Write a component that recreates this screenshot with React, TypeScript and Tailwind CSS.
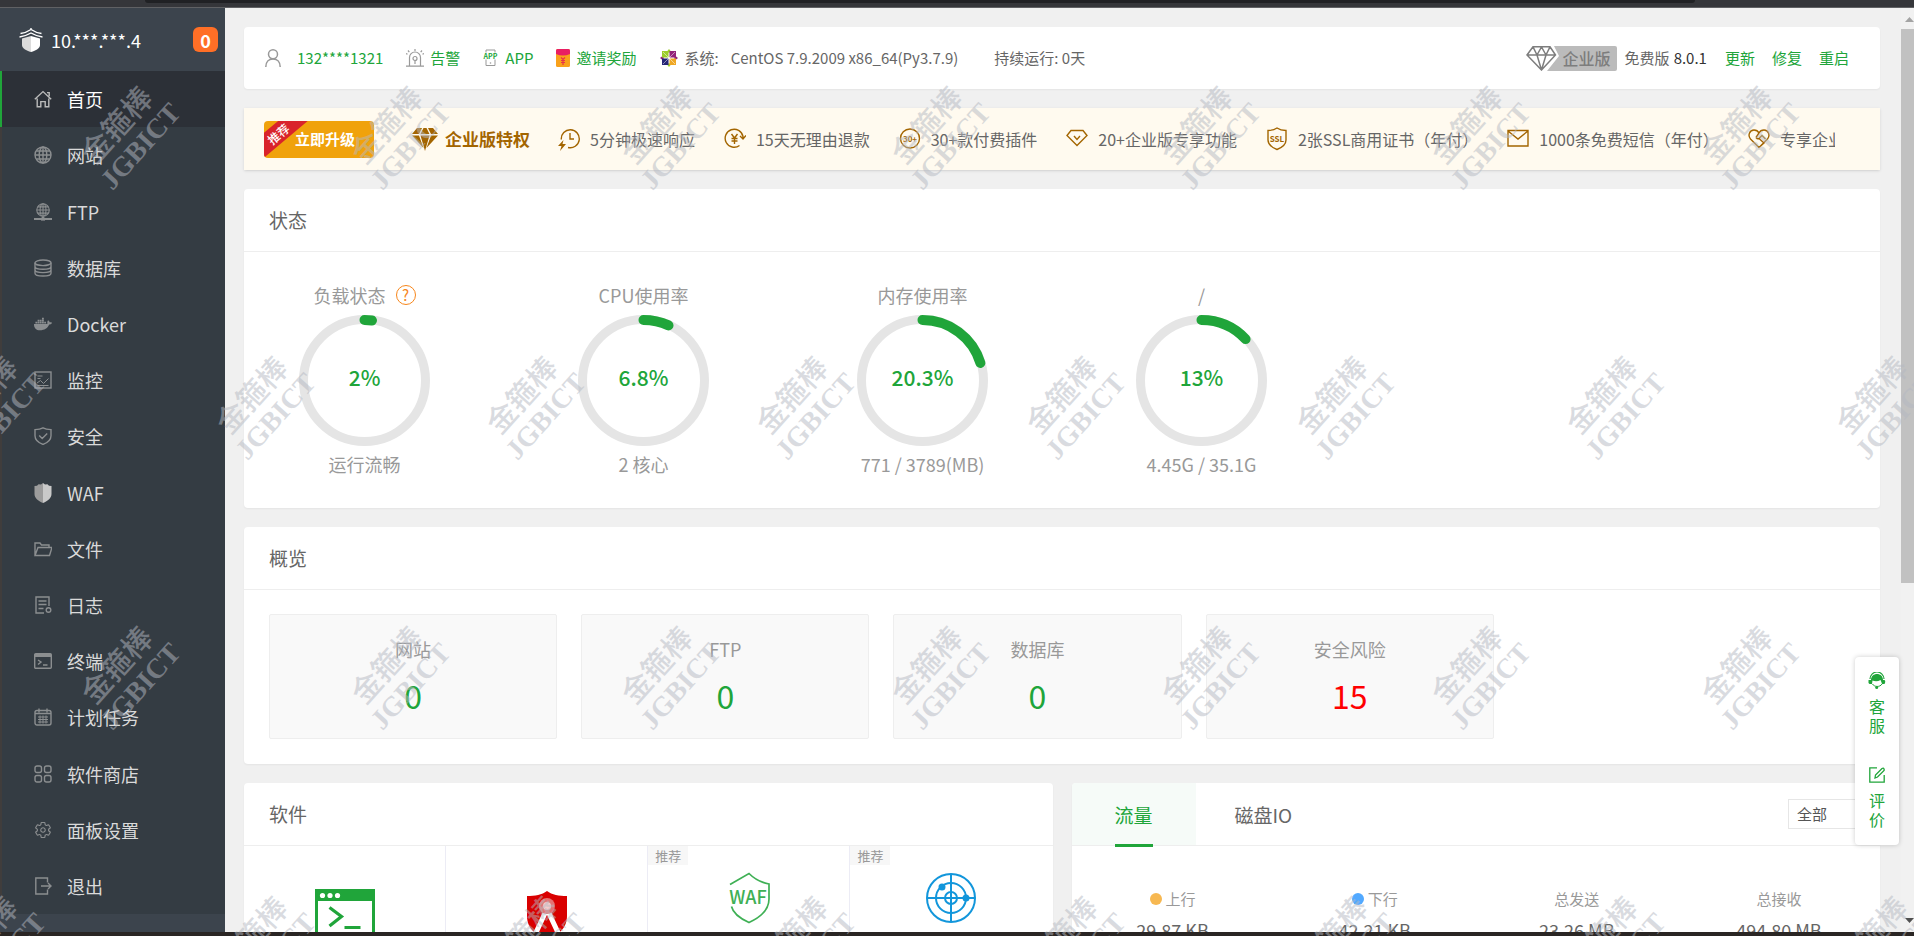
import React, { useState } from 'react';
import { FaDocker } from 'react-icons/fa';
import { IoSettingsOutline } from 'react-icons/io5';

type IconProps = { children: React.ReactNode; size?: string; box?: string };

// 线条图标的公共外壳
function Line({ children, size = 'size-[18px]', box = '0 0 18 18' }: IconProps) {
    return (
        <svg viewBox={box} className={`${size} shrink-0`} fill="none" stroke="currentColor" strokeWidth="1.4" aria-hidden="true">
            {children}
        </svg>
    );
}

const globe = (
    <>
        <circle cx="9" cy="9" r="8" />
        <ellipse cx="9" cy="9" rx="3.8" ry="8" />
        <path d="M9 1v16M1 9h16M2.3 5h13.4M2.3 13h13.4" />
    </>
);

const menuIcons: Record<string, React.ReactNode> = {
    home: <Line><path d="M.8 9.2 9 1.6l8.2 7.6M13 2.6h2.2v3.6M3.2 8.4v8.4h3.6v-5.2h4.4v5.2h3.6V8.4" /></Line>,
    site: <Line>{globe}</Line>,
    ftp: (
        <Line>
            <g transform="translate(2 0) scale(.78)">{globe}</g>
            <path d="M0 16h18M9 14v2" strokeWidth="2" />
            <rect x="7" y="14.6" width="4" height="3" fill="currentColor" stroke="none" />
        </Line>
    ),
    database: (
        <Line>
            <ellipse cx="9" cy="3.8" rx="8" ry="2.8" />
            <path d="M1 3.8v10.4c0 1.6 3.6 2.8 8 2.8s8-1.2 8-2.8V3.8M1 7.4c0 1.6 3.6 2.8 8 2.8s8-1.2 8-2.8M1 10.8c0 1.6 3.6 2.8 8 2.8s8-1.2 8-2.8" />
        </Line>
    ),
    docker: <FaDocker className="size-[18px]" />,
    monitor: (
        <Line>
            <rect x="1" y="1" width="16" height="16" />
            <path d="M3.5 5h5M3.5 7.5h3M3 12l3.5-2.5 3 3 5-5M3.5 14.5h11" strokeWidth="1" />
        </Line>
    ),
    safe: <Line><path d="M9 .9c2.4 1.3 5 1.6 8 1.7v6.2c0 4-3 6.8-8 8.6-5-1.8-8-4.6-8-8.6V2.6C4 2.5 6.6 2.2 9 .9zM5.2 8.4l3 3 5-5" /></Line>,
    waf: (
        <svg viewBox="0 0 18 20" className="h-5 w-[18px]" aria-hidden="true">
            <path d="M9 0 7 1.6 4.5 1.2 3 2.8.5 3v8c0 4 3.5 7 8.5 9z" fill="#9c9c9c" />
            <path d="m9 0 2 1.6 2.5-.4L15 2.8l2.5.2v8c0 4-3.5 7-8.5 9z" fill="#c9c9c9" />
        </svg>
    ),
    folder: <Line><path d="M1 15V3h5l1.5 2H15v2.5M1 15.5 4 7.5h14l-2.5 8z" /></Line>,
    log: (
        <Line>
            <path d="M10 17H2V1h13v9M4.5 5h8M4.5 8.5h8M4.5 12.5h5" />
            <circle cx="14.5" cy="14" r="2.3" />
        </Line>
    ),
    term: (
        <Line>
            <rect x="0.7" y="1.7" width="16.6" height="14.6" rx="1" />
            <path d="M1 3.5h16" strokeWidth="3" />
            <path d="m4 8 3 2-3 2.5M9 13h4.5" />
        </Line>
    ),
    cron: (
        <Line>
            <rect x="1" y="2.5" width="16" height="14.5" rx="2" />
            <path d="M5 .5v4M13 .5v4M1 5.5h16" />
            <path d="M4 9h10M4 11.5h10M4 14h10M6 7.5v8M9 7.5v8M12 7.5v8" strokeWidth="1" />
        </Line>
    ),
    soft: (
        <Line>
            <rect x="1" y="1" width="6.5" height="6.5" rx="2" />
            <rect x="10.5" y="1" width="6.5" height="6.5" rx="2" />
            <rect x="1" y="10.5" width="6.5" height="6.5" rx="2" />
            <rect x="10.5" y="10.5" width="6.5" height="6.5" rx="2" />
        </Line>
    ),
    config: <IoSettingsOutline className="size-[18px]" />,
    exit: <Line><path d="M13.5 5.5V1H1.8v16h11.7v-4.5M7 9h10M14 6l3 3-3 3" /></Line>,
};

const menus = [
    { key: 'home', title: '首页' },
    { key: 'site', title: '网站' },
    { key: 'ftp', title: 'FTP' },
    { key: 'database', title: '数据库' },
    { key: 'docker', title: 'Docker' },
    { key: 'monitor', title: '监控' },
    { key: 'safe', title: '安全' },
    { key: 'waf', title: 'WAF' },
    { key: 'folder', title: '文件' },
    { key: 'log', title: '日志' },
    { key: 'term', title: '终端' },
    { key: 'cron', title: '计划任务' },
    { key: 'soft', title: '软件商店' },
    { key: 'config', title: '面板设置' },
    { key: 'exit', title: '退出' },
];

const gauges = [
    { title: '负载状态', value: 2, desc: '运行流畅', help: true },
    { title: 'CPU使用率', value: 6.8, desc: '2 核心' },
    { title: '内存使用率', value: 20.3, desc: '771 / 3789(MB)' },
    { title: '/', value: 13, desc: '4.45G / 35.1G' },
];

const overview = [
    { title: '网站', count: 0 },
    { title: 'FTP', count: 0 },
    { title: '数据库', count: 0 },
    { title: '安全风险', count: 15, danger: true },
];

const traffic = [
    { title: '上行', value: '29.87 KB', dot: 'bg-[#f7b851]' },
    { title: '下行', value: '42.21 KB', dot: 'bg-[#52a9ff]' },
    { title: '总发送', value: '23.26 MB' },
    { title: '总接收', value: '494.80 MB' },
];

const privileges = [
    {
        text: '5分钟极速响应',
        icon: (
            <>
                <path d="M3.3 12.5A9 9 0 1 1 10 20.5M12 6v6h4" />
                <path d="M5.5 13 0 19h3.5L2 24l6-7H4.500z" fill="currentColor" stroke="none" />
            </>
        ),
    },
    {
        text: '15天无理由退款',
        icon: <path d="M15.5 18.5A9 9 0 1 1 19 9.5v2M16 9l3 3 3-3.5M7.5 7l3 4 3-4M10.5 11v6M7.5 11.5h6M7.5 14h6" />,
    },
    {
        text: '30+款付费插件',
        icon: (
            <>
                <circle cx="11" cy="11.5" r="9.5" />
                <text x="11" y="14.5" textAnchor="middle" fontSize="8" fontWeight="600" fill="currentColor" stroke="none">30+</text>
            </>
        ),
    },
    { text: '20+企业版专享功能', icon: <path d="M5 3.5h12l4 5-10 10-10-10zM8 9l3 3.5L14 9" /> },
    {
        text: '2张SSL商用证书（年付）',
        icon: (
            <>
                <path d="M11 1c2.8 2 5.5 2.5 9 2.5V13c0 4.5-4 7.5-9 9.5C6 20.5 2 17.5 2 13V3.5C5.5 3.5 8.2 3 11 1z" />
                <text x="11" y="14.5" textAnchor="middle" fontSize="8" fontWeight="700" fill="currentColor" stroke="none">SSL</text>
            </>
        ),
    },
    { text: '1000条免费短信（年付）', icon: <path d="M1 3.5h20V19H1zM1 4l10 8 10-8" /> },
    {
        text: '专享企业微信服务',
        icon: <path d="M11 20.5 2.5 12C-.5 8.5 1.5 3 6 3c2 0 4 1 5 3 1-2 3-3 5-3 4.5 0 6.5 5.5 3.5 9zM11 20.5l5-4.5-5-4.500M8 10.500l3-4.500M8 10.500c1.500 2 3 1.500 4 0l2-2 3.500 3.500" />,
    },
];

function Card({ title, children }: { title: string; children: React.ReactNode }) {
    return (
        <section className="rounded bg-white shadow-xs">
            <h2 className="flex h-[63px] items-center border-b border-[#eee] px-[25px] text-[19px] text-[#666]">{title}</h2>
            {children}
        </section>
    );
}

function Gauge({ value }: { value: number }) {
    return (
        <svg viewBox="0 0 131 131" className="mt-2 mb-1.5 size-[131px]" role="img" aria-label={`${value}%`}>
            <circle cx="65.5" cy="65.5" r="61" fill="none" stroke="#e5e5e5" strokeWidth="9" />
            <circle
                cx="65.5" cy="65.5" r="60.5" fill="none" stroke="#20a53a" strokeWidth="10" strokeLinecap="round"
                pathLength="100" strokeDasharray={`${value} 100`} transform="rotate(-90 65.5 65.5)"
            />
            <text x="65.5" y="71" textAnchor="middle" fontSize="21" fontWeight="500" fill="#20a53a">{value}%</text>
        </svg>
    );
}

function Sidebar() {
    const [active, setActive] = useState('home');

    return (
        <aside className="flex w-[225px] shrink-0 flex-col bg-[#3c444d]">
            <div className="flex h-[63px] shrink-0 items-center pl-[19px] pr-[7px] text-lg text-white">
                <svg viewBox="0 0 24 26" className="mr-2 h-[26px] w-6" aria-hidden="true">
                    <path d="M12 1v2M1.5 6.5C5 6 9 4.5 12 2.5c3 2 7 3.5 10.5 4M.5 10c4-.5 8-2 11.5-4 3.5 2 7.5 3.5 11.5 4" fill="none" stroke="#fff" strokeWidth="1.4" />
                    <path d="M3 11.5 12 9v16c-5-1.5-9-3.5-9-7z" fill="#dcdcdc" />
                    <path d="M21 11.5 12 9v16c5-1.5 9-3.5 9-7z" fill="#fff" />
                </svg>
                <span className="flex-1">10.***.***.4</span>
                <span className="flex size-[25px] items-center justify-center rounded-md bg-[#ff6f26] font-bold">0</span>
            </div>
            <nav className="flex min-h-0 flex-1 flex-col">
                {menus.map((item) => (
                    <a
                        key={item.key}
                        href={`#${item.key}`}
                        onClick={() => setActive(item.key)}
                        className={`flex flex-1 items-center border-l-2 pl-8 text-lg ${
                            active === item.key ? 'border-[#20a53a] bg-[#2c3037] text-white' : 'border-[#403d3c] bg-[#343c43] text-[#dadada]'
                        }`}
                    >
                        <span className={`mr-[15px] w-[18px] ${active === item.key ? 'text-[#bbb]' : 'text-[#8b8e90]'}`}>{menuIcons[item.key]}</span>
                        {item.title}
                    </a>
                ))}
            </nav>
            <div className="h-[18px] shrink-0" />
        </aside>
    );
}

function InfoBar() {
    return (
        <header className="flex h-[62px] items-center rounded bg-white pl-[21px] pr-[31px] text-[15px] whitespace-nowrap text-[#666] shadow-xs">
            <svg viewBox="0 0 16 18" className="mr-4 h-[18px] w-4" fill="none" stroke="#999" strokeWidth="1.5" aria-hidden="true">
                <circle cx="8" cy="5.3" r="4.5" />
                <path d="M.8 18c0-5 3-8 7.2-8s7.2 3 7.2 8" />
            </svg>
            <a href="#user" className="text-[#20a53a]">132****1321</a>
            <a href="#alarm" className="ml-[23px] flex items-center gap-1.5 text-[#20a53a]">
                <svg viewBox="0 0 18 18" className="size-[18px]" fill="none" stroke="#999" strokeWidth="1.2" aria-hidden="true">
                    <path d="M0 17.2h18M3.5 17V8.500a5.500 5.500 0 0 1 11 0V17M9 0v2M2 1.500l1.300 1.600M16 1.500l-1.300 1.600M0 4.500l1.500.8M18 4.500l-1.500.8M9 11.500V15" />
                    <circle cx="9" cy="9.5" r="2" />
                </svg>
                告警
            </a>
            <a href="#app" className="ml-[23px] flex items-center gap-[7px] text-[#20a53a]">
                <svg viewBox="0 0 15 18" className="h-[18px] w-[15px]" aria-hidden="true">
                    <path d="M3 3.500V1h9v2.500M3 10.500v6h9v-6" fill="none" stroke="#999" />
                    <circle cx="7.5" cy="14" r=".8" fill="#999" />
                    <text x="7.5" y="9.500" textAnchor="middle" fontSize="7" fontWeight="700" fill="#20a53a">APP</text>
                </svg>
                APP
            </a>
            <a href="#invite" className="ml-[23px] flex items-center gap-1.5 text-[#20a53a]">
                <svg viewBox="0 0 14 18" className="h-[18px] w-[14px]" aria-hidden="true">
                    <rect width="14" height="18" rx="1.5" fill="#f9a11b" />
                    <path d="M0 1.5Q0 0 1.5 0h11Q14 0 14 1.5V5Q7 8 0 5z" fill="#e91e63" />
                    <path d="m5 8.500 2 2L9 8.500M7 10.500V16M5 11.500h4M5 13.500h4" fill="none" stroke="#e8334a" strokeWidth="1.2" />
                </svg>
                邀请奖励
            </a>
            <span className="ml-6 flex items-center gap-1.5">
                <svg viewBox="0 0 18 18" className="size-[18px]" aria-hidden="true">
                    <path d="M9 0 11 2.500 9 4 7 2.500z" fill="#9ccd2a" />
                    <path d="M18 9l-2.500 2L14 9l1.500-2z" fill="#932279" />
                    <path d="M9 18l-2-2.500L9 14l2 1.500z" fill="#9ccd2a" />
                    <path d="M0 9l2.500-2L4 9l-1.500 2z" fill="#932279" />
                    <rect x="2" y="2" width="6.500" height="6.500" fill="#9ccd2a" />
                    <rect x="9.500" y="2" width="6.500" height="6.500" fill="#932279" />
                    <rect x="2" y="9.500" width="6.500" height="6.500" fill="#262577" />
                    <rect x="9.500" y="9.500" width="6.500" height="6.500" fill="#efa724" />
                    <path d="M3 3l12 12M15 3 3 15" stroke="#fff" strokeWidth=".5" />
                </svg>
                系统:
            </span>
            <span className="ml-3">CentOS 7.9.2009 x86_64(Py3.7.9)</span>
            <span className="ml-9 flex-1">持续运行: 0天</span>
            <a href="#pro" className="mr-2 flex h-[25px] items-center text-base font-medium text-[#7d7d7d]">
                <svg viewBox="0 0 34 25" className="h-[25px] w-[34px]" aria-hidden="true">
                    <path d="M28 0h6v25H21l12-15z" fill="#bbb" />
                    <path d="M7 .8h17l5.500 8.200-14 15L1 9zM1 9h28.500M7 .8 11 9l4.500 15L20 9l4-8.200M11 9l4.500-8L20 9" fill="none" stroke="#7d7d7d" strokeWidth="1.5" />
                </svg>
                <span className="flex h-full items-center rounded-r-xs bg-[#bbb] pl-[3px] pr-1.5">企业版</span>
            </a>
            <span>免费版</span>
            <span className="ml-1 text-[#333]">8.0.1</span>
            <button type="button" className="ml-[18px] text-[#20a53a]">更新</button>
            <button type="button" className="ml-[17px] text-[#20a53a]">修复</button>
            <button type="button" className="ml-[17px] text-[#20a53a]">重启</button>
        </header>
    );
}

function Banner() {
    return (
        <div className="flex h-[62px] items-center bg-[#fffaef] pl-5 pr-[45px] whitespace-nowrap shadow-sm">
            <button type="button" className="relative h-[37px] w-[110px] shrink-0 overflow-hidden rounded bg-[#f0a20c] pl-3 text-[15px] font-bold text-white">
                <span className="absolute -left-[26px] top-[3px] w-20 -rotate-40 bg-[#d9232b] text-center text-xs leading-[19px] font-medium">推荐</span>
                立即升级
            </button>
            <svg viewBox="0 0 26 23" className="ml-[38px] mr-[7px] h-[23px] w-[26px] shrink-0" fill="#a36500" aria-hidden="true">
                <path d="M5 0h5L7 6H0zM11.5 0h3l3 6h-9zM16 0h5l5 6h-7zM0 7.500h7L11.500 20zM8.500 7.500h9L13 23zM19 7.500h7L14.500 20z" />
            </svg>
            <strong className="mr-7 text-[17px] font-bold text-[#a36500]">企业版特权</strong>
            <ul className="flex min-w-0 flex-1 gap-[29px] overflow-hidden text-base text-[#666]">
                {privileges.map((item) => (
                    <li key={item.text} className="flex shrink-0 items-center gap-2.5">
                        <span className="text-[#a36500]">
                            <Line size="h-6 w-[22px]" box="0 0 22 24">{item.icon}</Line>
                        </span>
                        {item.text}
                    </li>
                ))}
            </ul>
        </div>
    );
}

function Software() {
    return (
        <Card title="软件">
            <div className="grid h-[200px] grid-cols-4 divide-x divide-[#ececf5]">
                <a href="#ssh" aria-label="终端" className="flex justify-center pt-[43px]">
                    <svg viewBox="0 0 60 60" className="size-[60px]" aria-hidden="true">
                        <path d="M1.5 1.5h57v57h-57z" fill="#fff" stroke="#20a53a" strokeWidth="3" />
                        <path d="M0 0h60v12H0z" fill="#20a53a" />
                        <circle cx="7.5" cy="6.5" r="2.6" fill="#fff" />
                        <circle cx="15" cy="6.5" r="2.6" fill="#fff" />
                        <circle cx="22.5" cy="6.5" r="2.6" fill="#fff" />
                        <path d="m14.5 18.5 12 9-12 9.500M29.500 38.500h16" fill="none" stroke="#20a53a" strokeWidth="3.200" />
                    </svg>
                </a>
                <a href="#shield" aria-label="防护" className="flex justify-center pt-[45px]">
                    <svg viewBox="0 0 40 48" className="h-12 w-10" aria-hidden="true">
                        <path d="M20 0c5 4 12 5 20 5v20c0 12-8 19-20 23C8 44 0 37 0 25V5c8 0 15-1 20-5z" fill="#d90000" />
                        <path d="M20 18 6 48M20 18l14 30" stroke="#fff" strokeWidth="5" />
                        <circle cx="20" cy="15" r="8" fill="#e57373" />
                        <circle cx="20" cy="15" r="4" fill="#f6caca" />
                    </svg>
                </a>
                <a href="#waf" className="relative flex justify-center pt-[26px]">
                    <span className="absolute left-0 top-0 bg-[#f7f7f7] px-[7px] text-[13px] leading-[19px] text-[#999]">推荐</span>
                    <svg viewBox="0 0 44 52" className="h-[52px] w-11" aria-hidden="true">
                        <path d="M3 12.5 22 1.500c6 6 12 9 20 10.500v15c0 11-8 18-20 23.500C12 46 6 41 4.500 34.500" fill="none" stroke="#3fb055" strokeWidth="1.700" />
                        <text x="21" y="32" textAnchor="middle" fontSize="18" fontWeight="500" fill="#3fb055">WAF</text>
                    </svg>
                </a>
                <a href="#scan" aria-label="扫描" className="relative flex justify-center pt-[27px]">
                    <span className="absolute left-0 top-0 bg-[#f7f7f7] px-[7px] text-[13px] leading-[19px] text-[#999]">推荐</span>
                    <svg viewBox="0 0 50 50" className="size-[50px]" fill="none" stroke="#1296db" strokeWidth="2" aria-hidden="true">
                        <circle cx="25" cy="25" r="24" />
                        <circle cx="25" cy="25" r="15" />
                        <circle cx="25" cy="25" r="6" />
                        <path d="M25 1v48M1 25h48" />
                        <circle cx="16" cy="14" r="2.5" fill="#1296db" />
                        <circle cx="40" cy="25" r="2.5" fill="#1296db" />
                    </svg>
                </a>
            </div>
        </Card>
    );
}

function Traffic() {
    const [tab, setTab] = useState('流量');

    return (
        <section className="rounded bg-white shadow-xs">
            <div className="flex h-[63px] items-center border-b border-[#eee] pr-3">
                {['流量', '磁盘IO'].map((name) => (
                    <button
                        key={name}
                        type="button"
                        onClick={() => setTab(name)}
                        className={`h-full text-[19px] ${tab === name ? 'rounded-tl bg-[#f6fbf8] px-[43px] text-[#20a53a]' : 'px-[39px] text-[#666]'}`}
                    >
                        <span className={`flex h-16 items-center border-b-3 pt-[3px] ${tab === name ? 'border-[#20a53a]' : 'border-transparent'}`}>{name}</span>
                    </button>
                ))}
                <select aria-label="网卡" className="ml-auto h-[30px] w-20 appearance-none border border-[#e6e6e6] bg-white px-2 text-[15px] text-[#555]">
                    <option>全部</option>
                </select>
            </div>
            <div className="grid grid-cols-4 pt-10 text-center">
                {traffic.map((item) => (
                    <div key={item.title}>
                        <p className="flex h-[26px] items-center justify-center gap-1 text-[15px] text-[#999]">
                            {item.dot && <i className={`size-3 rounded-full ${item.dot}`} />}
                            {item.title}
                        </p>
                        <p className="mt-1 text-lg text-[#666]">{item.value}</p>
                    </div>
                ))}
            </div>
        </section>
    );
}

function FloatTools() {
    return (
        <div className="absolute right-[15px] bottom-[91px] flex h-[188px] w-11 flex-col items-center rounded bg-white pt-[15px] text-base leading-[19px] text-[#20a53a] shadow-[0_0_5px_rgba(0,0,0,0.2)]">
            <button type="button" className="flex w-4 flex-col items-center">
                <svg viewBox="0 0 18 17" className="h-[17px] w-[18px] shrink-0" aria-hidden="true">
                    <path d="M2 7a7 7 0 0 1 14 0" fill="none" stroke="#20a53a" strokeWidth="1.2" />
                    <path d="M3 8c0-8 12-8 12 0h1.500q1.500 1 0 4H14c-.5-2-1-3-1.500-4C10 9.500 7 9.500 4.500 8.500L4 12H1.500Q0 11 .500 8z" fill="#20a53a" />
                    <path d="M4.500 12c1.500 3 7.500 3.500 9.500 0" fill="none" stroke="#20a53a" />
                    <circle cx="8.7" cy="15.5" r="1.5" fill="#20a53a" />
                </svg>
                <span className="mt-2">客服</span>
            </button>
            <button type="button" className="mt-8 flex w-4 flex-col items-center">
                <svg viewBox="0 0 16 16" className="size-4 shrink-0" fill="none" stroke="#20a53a" strokeWidth="1.3" aria-hidden="true">
                    <path d="M8 .8H.8v14.400h14.400V8M6 11l.5-3L13 1.500q1.500-1 2 .5t-.5 2L8.500 10z" />
                </svg>
                <span className="mt-2">评价</span>
            </button>
        </div>
    );
}

function Watermark() {
    return (
        <div className="pointer-events-none absolute inset-0 overflow-hidden font-medium text-[#b4b8c1]/50" aria-hidden="true">
            {[0, 1, 2, 3].map((row) => (
                <div key={row} className={`flex h-[270px] ${row % 2 ? '-ml-[142px]' : '-ml-[7px]'}`}>
                    {Array.from({ length: 8 }, (_, i) => (
                        <div key={i} className="flex w-[270px] shrink-0 items-center justify-center">
                            <div className="-rotate-48 text-center leading-[34px]">
                                <p className="text-[30px]">金箍棒</p>
                                <p className="font-['Liberation_Serif',serif] text-[28px] font-bold">JGBICT</p>
                            </div>
                        </div>
                    ))}
                </div>
            ))}
        </div>
    );
}

export default function App() {
    return (
        <div className="relative flex h-screen flex-col overflow-hidden bg-[#f0f0f0] font-['Noto_Sans_CJK_SC',sans-serif]">
            <div className="h-2 shrink-0 border-b border-[#606164] bg-[#35363a]">
                <div className="ml-[145px] mr-[219px] h-[3px] rounded-b-md bg-[#202124]" />
            </div>

            <div className="flex min-h-0 flex-1">
                <Sidebar />
                <main className="flex min-w-0 flex-1 flex-col gap-[19px] overflow-hidden py-[19px] pl-[19px] pr-[21px] *:shrink-0">
                    <InfoBar />
                    <Banner />
                    <Card title="状态">
                        <div className="flex gap-24 pl-[29px] pt-[31px] pb-8 text-lg leading-6 text-[#999]">
                            {gauges.map((item) => (
                                <div key={item.title} className="flex w-[183px] flex-col items-center">
                                    <div className="flex items-center gap-2.5">
                                        {item.title}
                                        {item.help && (
                                            <button type="button" className="flex size-5 items-center justify-center rounded-full border border-[#f7861b] text-[15px] text-[#f7861b]">?</button>
                                        )}
                                    </div>
                                    <Gauge value={item.value} />
                                    <div>{item.desc}</div>
                                </div>
                            ))}
                        </div>
                    </Card>
                    <Card title="概览">
                        <div className="grid grid-cols-5 gap-6 pt-6 pb-[25px] pl-[25px] pr-[74px] text-center">
                            {overview.map((item) => (
                                <a key={item.title} href={`#${item.title}`} className="h-[125px] rounded-xs border border-[#eee] bg-[#f9f9f9] pt-[22px]">
                                    <p className="text-lg leading-6 text-[#999]">{item.title}</p>
                                    <p className={`mt-3.5 text-[32px] leading-10 ${item.danger ? 'text-[#f00]' : 'text-[#20a53a]'}`}>{item.count}</p>
                                </a>
                            ))}
                        </div>
                    </Card>
                    <div className="grid grid-cols-2 gap-[19px]">
                        <Software />
                        <Traffic />
                    </div>
                </main>
                {/* 右侧滚动条 */}
                <div className="flex w-[13px] shrink-0 flex-col bg-[#f1f1f1]">
                    <svg viewBox="0 0 9 5" className="mt-[9px] mb-[7px] ml-1 h-[5px] w-[9px] shrink-0" fill="#a3a3a3" aria-hidden="true"><path d="M0 5 4.5 0 9 5z" /></svg>
                    <div className="h-3/5 bg-[#c1c1c1]" />
                    <svg viewBox="0 0 9 5" className="mt-auto mb-[9px] ml-1 h-[5px] w-[9px] shrink-0" fill="#505050" aria-hidden="true"><path d="M0 0h9L4.5 5z" /></svg>
                </div>
            </div>

            <div className="h-1 shrink-0 bg-[#2a2624]" />
            <FloatTools />
            <Watermark />
        </div>
    );
}
